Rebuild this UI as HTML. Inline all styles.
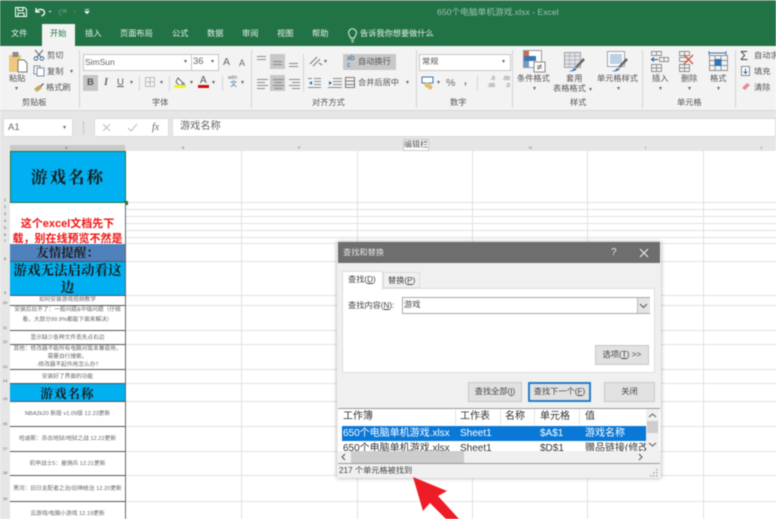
<!DOCTYPE html>
<html><head><meta charset="utf-8">
<style>
html,body{margin:0;padding:0;background:#fff;}
#p{position:relative;width:776px;height:519px;overflow:hidden;background:#fff;font-family:"Liberation Sans","Noto Sans CJK SC",sans-serif;font-size:8.2px;color:#555;filter:blur(.45px);}
#p div,#p span.a{position:absolute;white-space:nowrap;}
.t{line-height:14px;}
.sep{width:1px;background:#d4d4d4;top:50px;height:58px;}
.gl{font-size:8.2px;color:#555;line-height:12px;top:97px;}
.tab{color:#e8f1ec;font-size:8.2px;line-height:14px;top:27px;}
.hl{background:#e2e2e2;height:1px;left:126px;width:650px;}
.vl{background:#e2e2e2;width:1px;top:151px;height:368px;}
.rn{left:0;width:10px;background:#e6e6e6;font-size:4px;color:#555;text-align:center;line-height:5px;}
.c{left:10px;width:116px;box-sizing:border-box;border-bottom:1px solid #555;border-right:1px solid #666;text-align:center;overflow:hidden;color:#666;font-size:5.7px;line-height:8px;white-space:normal!important;background:#fff;}
.sf{font-family:"Liberation Serif","Noto Serif CJK SC",serif;font-weight:700;color:#1a1a1a;}
.btn{background:#e1e1e1;border:1px solid #c8c8c8;box-sizing:border-box;text-align:center;color:#444;font-size:8.2px;}
.lh{top:410px;font-size:10px;color:#333;line-height:13px;}
.l1{top:427px;font-size:10px;color:#fff;line-height:13px;}
.rb{font-size:8.2px;color:#555;line-height:12px;text-align:center;}
.ar{font-size:6px;color:#666;line-height:6px;}
</style></head><body>
<div id="p">
<!-- title bar -->
<div style="left:0;top:0;width:776px;height:46px;background:#217346;"></div>
<div style="left:0;top:0;width:776px;height:1px;background:#6d8f7c;"></div>
<svg style="position:absolute;left:0;top:0" width="100" height="24" fill="none" stroke="#fff">
<path d="M15.500 7.500h9l2 2v7h-11z M18 7.500v3h5v-3 M18 16.500v-3.500h6v3.500" stroke-width="1"/>
<path d="M36 8v4h4 M36.500 12c2-4 8-3 8 .5 0 2-1.500 3-3 3.500" stroke-width="1.300"/>
<path d="M48.500 11h3l-1.500 1.500z" fill="#fff" stroke="none"/>
<path d="M66 8.500v3.500h-4 M66 12c-2-3.500-7-2.500-7 .5 0 1.500 1 2.500 2.500 3" stroke="#4f8f6d" stroke-width="1.200"/>
<path d="M73.500 11h3l-1.500 1.500z" fill="#4f8f6d" stroke="none"/>
<path d="M85 9.500h4 M85 11.500h4l-2 2z" stroke="#fff" stroke-width=".8" fill="#fff"/>
</svg>
<div class="t" style="left:437px;top:5px;color:#9cc3ad;font-size:8.700px;">650个电脑单机游戏.xlsx  -  Excel</div>
<!-- tabs -->
<div style="left:42px;top:24px;width:33px;height:22px;background:#f3f3f3;"></div>
<div class="tab" style="left:11px;">文件</div>
<div class="tab" style="left:50px;color:#217346;">开始</div>
<div class="tab" style="left:85px;">插入</div>
<div class="tab" style="left:120px;">页面布局</div>
<div class="tab" style="left:172px;">公式</div>
<div class="tab" style="left:207px;">数据</div>
<div class="tab" style="left:242px;">审阅</div>
<div class="tab" style="left:277px;">视图</div>
<div class="tab" style="left:312px;">帮助</div>
<svg style="position:absolute;left:347px;top:28px" width="12" height="15" fill="none" stroke="#e8f1ec" stroke-width="1"><path d="M3.500 10c0-2-2-3-2-5.200a4 4 0 0 1 8 0c0 2.200-2 3.200-2 5.200z M4 12h3 M4.500 14h2"/></svg>
<div class="tab" style="left:360px;">告诉我你想要做什么</div>
<!-- ribbon -->
<div style="left:0;top:46px;width:776px;height:64px;background:#f3f3f3;"></div>
<div style="left:0;top:110px;width:776px;height:34px;background:#e6e6e6;"></div>
<div style="left:0;top:110px;width:776px;height:1px;background:#d6d6d6;"></div>
<div class="sep" style="left:79px;"></div><div class="sep" style="left:251px;"></div>
<div class="sep" style="left:416px;"></div><div class="sep" style="left:512px;"></div>
<div class="sep" style="left:642px;"></div><div class="sep" style="left:735px;"></div>
<!-- clipboard -->
<svg style="position:absolute;left:7px;top:50px" width="22" height="23"><rect x="2" y="5" width="12" height="17" fill="#edc87e"/><rect x="5.500" y="2" width="6" height="5" fill="#8a8a8a"/><path d="M11 10h6l3 3v9h-9z" fill="#fff" stroke="#777"/></svg>
<div class="rb" style="left:9px;top:73px;">粘贴</div>
<div class="ar" style="left:15px;top:86px;">▾</div>
<svg style="position:absolute;left:33px;top:49px" width="12" height="12" fill="none" stroke="#3f6f9f"><path d="M2 1l6 7 M10 1L4 8" stroke="#666"/><circle cx="3" cy="9.500" r="1.800"/><circle cx="9" cy="9.500" r="1.800"/></svg>
<div class="t" style="left:47px;top:49px;">剪切</div>
<svg style="position:absolute;left:33px;top:65px" width="12" height="12" fill="#fff" stroke="#7a8fa8"><rect x="1" y="1" width="6" height="8"/><rect x="4" y="3" width="7" height="8"/></svg>
<div class="t" style="left:47px;top:65px;">复制</div><div class="ar" style="left:70px;top:69px;">▾</div>
<svg style="position:absolute;left:33px;top:82px" width="12" height="11"><path d="M1 7l5-4 3 3-5 4z" fill="#c9a85c"/><path d="M7 4l3-3 1 1-3 3z" fill="#666"/></svg>
<div class="t" style="left:46px;top:81px;">格式刷</div>
<div class="gl" style="left:22px;">剪贴板</div>
<!-- font -->
<div style="left:83px;top:54px;width:107px;height:15px;background:#fff;border:1px solid #c6c6c6;"></div>
<div class="t" style="left:85px;top:55px;font-size:8.500px;color:#666;">SimSun</div>
<div class="ar" style="left:184px;top:59px;">▾</div>
<div style="left:191px;top:54px;width:26px;height:15px;background:#fff;border:1px solid #c6c6c6;"></div>
<div class="t" style="left:193px;top:55px;font-size:9.500px;color:#666;">36</div>
<div class="ar" style="left:211px;top:59px;">▾</div>
<div class="t" style="left:223px;top:55px;font-size:10.500px;color:#666;">A</div>
<div class="t" style="left:239px;top:56px;font-size:9px;color:#666;">A</div>
<div style="left:83px;top:75px;width:15px;height:16px;background:#c6c6c6;"></div>
<div class="t" style="left:87px;top:76px;font-weight:700;font-size:9.500px;color:#555;">B</div>
<div class="t" style="left:104px;top:76px;font-style:italic;font-family:'Liberation Serif',serif;font-size:10.500px;font-weight:700;color:#666;">I</div>
<div class="t" style="left:117px;top:76px;font-size:9.500px;text-decoration:underline;color:#555;">U</div>
<div class="ar" style="left:130px;top:80px;">▾</div>
<div style="left:139px;top:76px;width:1px;height:15px;background:#d4d4d4;"></div>
<svg style="position:absolute;left:145px;top:77px" width="11" height="11" fill="none" stroke="#bdbdbd"><path d="M.5.500h9v9h-9z M5 .5v9 M.5 5h9"/></svg>
<div class="ar" style="left:160px;top:80px;">▾</div>
<div style="left:169px;top:76px;width:1px;height:15px;background:#d4d4d4;"></div>
<svg style="position:absolute;left:174px;top:77px" width="13" height="12"><path d="M4 1l5 5-3 3-4-4z" fill="#fff" stroke="#666"/><path d="M10 5l1 3h-2z" fill="#3a76b0"/></svg>
<div style="left:174px;top:85px;width:12px;height:3px;background:#f5f02a;"></div>
<div class="ar" style="left:190px;top:80px;">▾</div>
<div class="t" style="left:200px;top:74px;font-size:10px;color:#555;">A</div>
<div style="left:198px;top:85px;width:11px;height:3px;background:#d40b0b;"></div>
<div class="ar" style="left:212px;top:80px;">▾</div>
<div style="left:222px;top:76px;width:1px;height:15px;background:#d4d4d4;"></div>
<div class="t" style="left:228px;top:75px;font-size:5px;line-height:7px;color:#666;">wén</div>
<div class="t" style="left:230px;top:80px;font-size:7px;line-height:10px;color:#2f6eaa;">文</div>
<div class="ar" style="left:241px;top:80px;">▾</div>
<div class="gl" style="left:152px;">字体</div>
<!-- align -->
<div style="left:270px;top:54px;width:15px;height:15px;background:#c8c8c8;"></div>
<div style="left:270px;top:75px;width:15px;height:16px;background:#c8c8c8;"></div>
<svg style="position:absolute;left:256px;top:54px" width="55" height="38" stroke="#8a8a8a" stroke-width="1">
<path d="M1 2.500h9 M1 5.500h9"/>
<path d="M17 7.500h9 M17 10.500h9"/>
<path d="M33 9.500h9 M33 12.500h9"/>
<path d="M1 25.500h11 M1 28.500h8 M1 31.500h11 M1 34.500h8"/>
<path d="M17 25.500h11 M18.500 28.500h8 M17 31.500h11 M18.500 34.500h8"/>
<path d="M33 25.500h11 M36 28.500h8 M33 31.500h11 M36 34.500h8"/>
</svg>
<div style="left:303px;top:54px;width:1px;height:38px;background:#d4d4d4;"></div>
<svg style="position:absolute;left:308px;top:54px" width="16" height="14" fill="none" stroke="#777"><path d="M2 10L9 3 M5 12l7-7"/><path d="M11 9l3 2" stroke="#2f6eaa"/></svg>
<div class="ar" style="left:324px;top:59px;">▾</div>
<svg style="position:absolute;left:308px;top:77px" width="36" height="12" stroke="#8a8a8a"><path d="M6 1.500h7 M6 4.500h7 M6 7.500h7 M0 10.500h13 M0 1.500h4"/><path d="M1 6l3-2v4z" fill="#2f6eaa" stroke="none"/><path d="M25 1.500h9 M25 4.500h9 M25 7.500h9 M20 10.500h14"/><path d="M24 6l-3-2v4z" fill="#2f6eaa" stroke="none"/></svg>
<div style="left:343px;top:54px;width:53px;height:16px;background:#c8c8c8;"></div>
<div class="t" style="left:347px;top:55px;font-size:7px;color:#2f6eaa;line-height:7px;white-space:normal;width:9px;">ab c</div>
<div class="t" style="left:358px;top:55px;">自动换行</div>
<svg style="position:absolute;left:345px;top:77px" width="11" height="12" fill="none" stroke="#777"><path d="M.5.500h9v10h-9z M.5 4h9 M.5 7.500h9"/></svg>
<div class="t" style="left:358px;top:76px;">合并后居中</div>
<div class="ar" style="left:406px;top:80px;">▾</div>
<div class="gl" style="left:312px;">对齐方式</div>
<!-- number -->
<div style="left:419px;top:54px;width:90px;height:15px;background:#fff;border:1px solid #c6c6c6;"></div>
<div class="t" style="left:422px;top:55px;">常规</div>
<div class="ar" style="left:502px;top:59px;">▾</div>
<svg style="position:absolute;left:421px;top:76px" width="14" height="14"><rect x="1" y="1" width="11" height="6" fill="#fff" stroke="#3a76b0"/><circle cx="6" cy="9" r="2.500" fill="#e0c070"/><circle cx="9" cy="11" r="2.500" fill="#e0c070"/></svg>
<div class="ar" style="left:437px;top:80px;">▾</div>
<div class="t" style="left:446px;top:76px;font-size:10.500px;color:#666;">%</div>
<div class="t" style="left:464px;top:75px;font-size:10px;font-weight:700;color:#666;">,</div>
<div style="left:477px;top:76px;width:1px;height:15px;background:#d4d4d4;"></div>
<div class="t" style="left:482px;top:76px;font-size:5.500px;line-height:7px;color:#666;white-space:normal;width:13px;text-align:right;">.0 .00</div>
<div class="t" style="left:497px;top:76px;font-size:5.500px;line-height:7px;color:#666;white-space:normal;width:13px;text-align:right;">.00 .0</div>
<div class="gl" style="left:450px;">数字</div>
<!-- styles -->
<svg style="position:absolute;left:523px;top:50px" width="26" height="24"><rect x=".5" y=".5" width="18" height="17" fill="#fff" stroke="#999"/><rect x="1" y="1" width="5" height="6" fill="#c96a50"/><rect x="1" y="6" width="12" height="5" fill="#3a76b0"/><rect x="1" y="11" width="5" height="6" fill="#6e9bc8"/><rect x="11" y="12" width="11" height="10" fill="#fff" stroke="#888"/><path d="M14 16h5 M14 18h5 M15 20l3-6" stroke="#555" stroke-width=".7"/></svg>
<div class="rb" style="left:517px;top:73px;">条件格式</div>
<div class="ar" style="left:533px;top:86px;">▾</div>
<svg style="position:absolute;left:564px;top:52px" width="22" height="20"><rect x=".5" y=".5" width="16" height="15" fill="#dfe4ea" stroke="#a0a0a0"/><path d="M.5 4h16 M.5 8h16 M.5 12h16 M5.500.5v15 M11 .5v15" stroke="#a8a8a8" stroke-width=".7"/><path d="M4 19c3 0 5-1 6-3l3 1c-2 2-5 3-9 2z" fill="#2f75b5"/><path d="M11 15l8-9 2 2-8 8z" fill="#666"/></svg>
<div class="rb" style="left:566px;top:73px;">套用</div>
<div class="rb" style="left:553px;top:83px;">表格格式</div><div class="ar" style="left:589px;top:87px;">▾</div>
<svg style="position:absolute;left:607px;top:51px" width="22" height="21"><rect x=".5" y=".5" width="17" height="15" fill="#fff" stroke="#a0a0a0"/><rect x="3" y="3" width="12" height="10" fill="#bdd0e6"/><path d="M4 20c3 0 5-1 6-3l3 1c-2 2-5 3-9 2z" fill="#2f75b5"/><path d="M11 16l8-9 2 2-8 8z" fill="#666"/></svg>
<div class="rb" style="left:597px;top:73px;">单元格样式</div>
<div class="ar" style="left:617px;top:86px;">▾</div>
<div class="gl" style="left:570px;">样式</div>
<!-- cells -->
<svg style="position:absolute;left:650px;top:50px" width="112" height="24" fill="none" stroke="#8c8c8c" stroke-width=".9">
<path d="M1.500 1.500h10v4h-10z M1.500 14.500h10v7h-10z M6.500 14.500v7 M1.500 18h10 M6.500 1.500v4 M9.500 7.500h9v4h-9z M14 7.500v4"/>
<path d="M8 9.500H2 M4 7.500l-2.500 2 2.500 2" stroke="#2f75b5" stroke-width="1.200"/>
<path d="M29.500 1.500h10v4h-10z M34.500 1.500v4 M29.500 14.500h10v7h-10z M34.500 14.500v7 M29.500 18h10 M29.500 7.500h8v4h-8z"/>
<path d="M34 5l9 9 M43 5l-9 9" stroke="#d0563c" stroke-width="1.300"/>
<path d="M59 3h17 M59 1v4 M76 1v4" stroke="#2f75b5"/>
<path d="M59.500 5.500h18v15h-18z M65 5.500v15 M71 5.500v15 M59.500 10.500h18 M59.500 15.500h18"/>
<rect x="64.500" y="9" width="7" height="7" fill="#2f75b5" stroke="none"/>
</svg>
<div class="rb" style="left:652px;top:73px;">插入</div><div class="ar" style="left:659px;top:86px;">▾</div>
<div class="rb" style="left:681px;top:73px;">删除</div><div class="ar" style="left:688px;top:86px;">▾</div>
<div class="rb" style="left:710px;top:73px;">格式</div><div class="ar" style="left:717px;top:86px;">▾</div>
<div class="gl" style="left:677px;">单元格</div>
<!-- edit -->
<div class="t" style="left:740px;top:49px;font-size:13px;color:#444;">Σ</div>
<div class="t" style="left:754px;top:49px;">自动求和</div>
<svg style="position:absolute;left:741px;top:66px" width="10" height="11" fill="#fff" stroke="#888"><rect x=".5" y=".5" width="8" height="9"/><path d="M4.500 2.500v5 M2.500 5.500l2 2 2-2" stroke="#2f75b5" fill="none"/></svg>
<div class="t" style="left:754px;top:65px;">填充</div>
<svg style="position:absolute;left:741px;top:82px" width="10" height="10"><path d="M1 6l5-5 3 2-5 5z" fill="#e58a94"/></svg>
<div class="t" style="left:754px;top:81px;">清除</div>
<!-- formula bar -->
<div style="left:3px;top:118px;width:70px;height:19px;background:#fff;border:1px solid #dcdcdc;box-sizing:border-box;"></div>
<div class="t" style="left:8px;top:121px;font-size:9.500px;color:#666;">A1</div>
<div class="ar" style="left:63px;top:125px;">▾</div>
<div style="left:83px;top:122px;width:1px;height:12px;border-left:1px dotted #aaa;"></div>
<div style="left:94px;top:118px;width:75px;height:19px;background:#fff;border:1px solid #dcdcdc;box-sizing:border-box;"></div>
<svg style="position:absolute;left:102px;top:123px" width="36" height="10" fill="none" stroke="#c4c4c4" stroke-width="1.200"><path d="M1 1l7 7 M8 1L1 8"/><path d="M26 5l3 3 6-7"/></svg>
<div class="t" style="left:152px;top:121px;font-family:'Liberation Serif',serif;font-style:italic;font-size:10px;color:#666;">fx</div>
<div style="left:172px;top:118px;width:604px;height:19px;background:#fff;border:1px solid #dcdcdc;box-sizing:border-box;"></div>
<div class="t" style="left:180px;top:120px;font-size:10.200px;color:#666;">游戏名称</div>
<!-- column headers -->
<div style="left:0;top:144px;width:776px;height:7px;background:#e6e6e6;"></div>
<div style="left:10px;top:145px;width:115px;height:6px;background:#c9c9c9;"></div>
<div style="left:0;top:151px;width:10px;height:368px;background:#e6e6e6;"></div>
<div class="ar" style="left:65px;top:146px;font-size:4px;line-height:4px;">A</div>
<div class="ar" style="left:182px;top:146px;font-size:4px;line-height:4px;">E</div>
<div class="ar" style="left:298px;top:146px;font-size:4px;line-height:4px;">F</div>
<div class="ar" style="left:529px;top:146px;font-size:4px;line-height:4px;">H</div>
<div class="ar" style="left:645px;top:146px;font-size:4px;line-height:4px;">I</div>
<div class="ar" style="left:760px;top:146px;font-size:4px;line-height:4px;">J</div>
<!-- grid lines -->
<div class="vl" style="left:241px;"></div><div class="vl" style="left:357px;"></div><div class="vl" style="left:472px;"></div><div class="vl" style="left:587px;"></div><div class="vl" style="left:703px;"></div>
<div class="hl" style="top:202px"></div><div class="hl" style="top:209px"></div><div class="hl" style="top:216px"></div><div class="hl" style="top:223px"></div><div class="hl" style="top:230px"></div><div class="hl" style="top:237px"></div><div class="hl" style="top:243px"></div><div class="hl" style="top:261px"></div><div class="hl" style="top:295px"></div><div class="hl" style="top:305px"></div><div class="hl" style="top:330px"></div><div class="hl" style="top:344px"></div><div class="hl" style="top:369px"></div><div class="hl" style="top:383px"></div><div class="hl" style="top:401px"></div><div class="hl" style="top:426px"></div><div class="hl" style="top:451px"></div><div class="hl" style="top:475px"></div><div class="hl" style="top:501px"></div>
<!-- column A cells -->
<div class="c" style="top:151px;height:52px;background:#00b0f0;border:1px solid #217346;line-height:52px;"><span class="sf" style="font-size:16.500px;letter-spacing:2px;">游戏名称</span></div>
<div style="left:124px;top:201px;width:4px;height:4px;background:#217346;"></div>
<div class="c" style="top:203px;height:41px;font-size:11px;line-height:15px;color:#f01414;font-weight:700;padding-top:14px;border-bottom:0;">这个excel文档先下载，别在线预览不然是</div>
<div class="c sf" style="top:244px;height:18px;background:#4f81bd;font-size:12.500px;line-height:18px;">友情提醒：</div>
<div class="c sf" style="top:262px;height:34px;background:#00b0f0;font-size:13.500px;line-height:17px;">游戏无法启动看这边</div>
<div class="c" style="top:296px;height:10px;line-height:9px;">如何安装游戏视频教学</div>
<div class="c" style="top:306px;height:25px;padding:0 3px;line-height:9.500px;">安装后玩不了：一般问题&amp;中级问题（仔细看，大部分99.9%都能下面来解决）</div>
<div class="c" style="top:331px;height:14px;line-height:14px;">显示缺少各种文件丢失点右边</div>
<div class="c" style="top:345px;height:25px;padding:0 3px;">其他：修改器不能所有电脑对版本兼容用，需要自行搜索。<br>-修改器不起作用怎么办?</div>
<div class="c" style="top:370px;height:14px;line-height:14px;">安装好了界面的功能</div>
<div class="c sf" style="top:384px;height:18px;background:#00b0f0;line-height:21px;"><span style="font-size:12.500px;letter-spacing:1px;">游戏名称</span></div>
<div class="c" style="top:402px;height:25px;line-height:25px;">NBA2k20 新版 v1.09版 12.23更新</div>
<div class="c" style="top:427px;height:25px;line-height:25px;">哈迪斯：杀出地狱/地狱之战 12.22更新</div>
<div class="c" style="top:452px;height:24px;line-height:25px;">机甲战士5：雇佣兵 12.21更新</div>
<div class="c" style="top:476px;height:26px;line-height:26px;">黑河：旧日支配者之治/旧神统治 12.20更新</div>
<div class="c" style="top:502px;height:17px;line-height:25px;border-bottom:0;">云游戏/电脑小游戏 12.19更新</div>
<!-- row numbers -->
<div class="rn" style="top:197px;">1</div><div class="rn" style="top:204px;">2</div><div class="rn" style="top:211px;">3</div><div class="rn" style="top:218px;">4</div><div class="rn" style="top:225px;">5</div><div class="rn" style="top:232px;">6</div><div class="rn" style="top:238px;">7</div><div class="rn" style="top:256px;">8</div><div class="rn" style="top:290px;">9</div><div class="rn" style="top:300px;">10</div><div class="rn" style="top:325px;">11</div><div class="rn" style="top:339px;">12</div><div class="rn" style="top:364px;">13</div><div class="rn" style="top:378px;">14</div><div class="rn" style="top:396px;">15</div><div class="rn" style="top:421px;">16</div><div class="rn" style="top:446px;">17</div><div class="rn" style="top:470px;">18</div><div class="rn" style="top:496px;">19</div>
<!-- tooltip -->
<div style="left:403px;top:139px;width:26px;height:12px;background:#fff;border:1px solid #c8c8c8;box-sizing:border-box;font-size:8px;line-height:10px;text-align:center;color:#555;">编辑栏</div>
<!-- dialog -->
<div style="left:337px;top:242px;width:324px;height:236px;background:#f0f0f0;box-shadow:0 0 4px rgba(0,0,0,.35);"></div>
<div style="left:338px;top:242px;width:322px;height:21px;background:#6e6e6e;"></div>
<div class="t" style="left:343px;top:246px;color:#e4e4e4;font-size:8.200px;">查找和替换</div>
<div class="t" style="left:611px;top:246px;color:#e8e8e8;font-size:10px;">?</div>
<svg style="position:absolute;left:639px;top:248px" width="10" height="10" stroke="#eee" stroke-width="1.100"><path d="M1 1l8 8 M9 1l-8 8"/></svg>
<div style="left:342px;top:288px;width:313px;height:85px;background:#fff;border:1px solid #dedede;box-sizing:border-box;"></div>
<div style="left:342px;top:271px;width:41px;height:19px;background:#fff;border:1px solid #dedede;border-bottom:0;box-sizing:border-box;"></div>
<div style="left:383px;top:272px;width:37px;height:16px;background:#f0f0f0;border:1px solid #dedede;box-sizing:border-box;"></div>
<div class="t" style="left:348px;top:273px;font-size:8.200px;color:#444;">查找(<u>D</u>)</div>
<div class="t" style="left:388px;top:274px;font-size:8.200px;color:#444;">替换(<u>P</u>)</div>
<div class="t" style="left:348px;top:299px;font-size:8.200px;color:#444;">查找内容(<u>N</u>):</div>
<div style="left:402px;top:297px;width:248px;height:17px;background:#fff;border:1px solid #a8a8a8;box-sizing:border-box;"></div>
<div class="t" style="left:404px;top:298px;font-size:8.200px;color:#444;">游戏</div>
<div style="left:637px;top:298px;width:12px;height:15px;background:#e4e4e4;border-left:1px solid #bbb;"></div>
<svg style="position:absolute;left:639px;top:303px" width="9" height="6" fill="none" stroke="#555"><path d="M1 1l3.500 3.500L8 1"/></svg>
<div class="btn" style="left:595px;top:345px;width:54px;height:20px;line-height:18px;">选项(<u>T</u>) &gt;&gt;</div>
<div class="btn" style="left:468px;top:382px;width:54px;height:20px;line-height:18px;">查找全部(<u>I</u>)</div>
<div class="btn" style="left:528px;top:382px;width:63px;height:20px;line-height:16px;border:2px solid #2b7cc4;">查找下一个(<u>F</u>)</div>
<div class="btn" style="left:604px;top:382px;width:51px;height:20px;line-height:18px;">关闭</div>
<!-- list -->
<div style="left:338px;top:408px;width:322px;height:56px;background:#fff;border-top:1px solid #9a9a9a;border-bottom:1px solid #9a9a9a;box-sizing:border-box;overflow:hidden;"></div>
<div style="left:455px;top:409px;width:1px;height:16px;background:#e4e4e4;"></div>
<div style="left:500px;top:409px;width:1px;height:16px;background:#e4e4e4;"></div>
<div style="left:534px;top:409px;width:1px;height:16px;background:#e4e4e4;"></div>
<div style="left:579px;top:409px;width:1px;height:16px;background:#e4e4e4;"></div>
<div class="lh" style="left:343px;">工作簿</div><div class="lh" style="left:460px;">工作表</div><div class="lh" style="left:505px;">名称</div><div class="lh" style="left:540px;">单元格</div><div class="lh" style="left:585px;">值</div>
<div style="left:342px;top:426px;width:304px;height:15px;background:#0a78d7;"></div>
<div class="l1" style="left:343px;">650个电脑单机游戏.xlsx</div><div class="l1" style="left:460px;">Sheet1</div><div class="l1" style="left:540px;">$A$1</div><div class="l1" style="left:585px;">游戏名称</div>
<div style="left:338px;top:441px;width:308px;height:10px;overflow:hidden;">
<span class="a" style="left:5px;top:1px;font-size:10px;line-height:13px;color:#333;">650个电脑单机游戏.xlsx</span><span class="a" style="left:122px;top:1px;font-size:10px;line-height:13px;color:#333;">Sheet1</span><span class="a" style="left:202px;top:1px;font-size:10px;line-height:13px;color:#333;">$D$1</span><span class="a" style="left:247px;top:1px;font-size:10px;line-height:13px;color:#333;">赠品链接(修改</span>
</div>
<!-- list scrollbars -->
<div style="left:646px;top:409px;width:13px;height:42px;background:#f0f0f0;"></div>
<div style="left:647px;top:421px;width:11px;height:12px;background:#cdcdcd;"></div>
<svg style="position:absolute;left:648px;top:412px" width="9" height="36" fill="none" stroke="#555"><path d="M1 5l3.500-3L8 5 M1 31l3.500 3L8 31"/></svg>
<div style="left:338px;top:451px;width:322px;height:12px;background:#f0f0f0;"></div>
<div style="left:351px;top:451px;width:113px;height:12px;background:#cdcdcd;"></div>
<svg style="position:absolute;left:341px;top:453px" width="306" height="8" fill="none" stroke="#555"><path d="M4 1L1 4l3 3 M298 1l3 3-3 3"/></svg>
<div class="t" style="left:339px;top:464px;font-size:8.200px;color:#444;line-height:13px;">217 个单元格被找到</div>
<svg style="position:absolute;left:650px;top:468px" width="9" height="9" fill="#aaa"><rect x="6" y="1" width="1.500" height="1.500"/><rect x="3" y="4" width="1.500" height="1.500"/><rect x="6" y="4" width="1.500" height="1.500"/><rect x="0" y="7" width="1.500" height="1.500"/><rect x="3" y="7" width="1.500" height="1.500"/><rect x="6" y="7" width="1.500" height="1.500"/></svg>
<!-- arrow -->
<svg style="position:absolute;left:400px;top:470px" width="80" height="49"><polygon points="13,7 47,21 38,26 59,49 46,49 30,33 23,41" fill="#ee1c25"/></svg>
</div>
</body></html>
